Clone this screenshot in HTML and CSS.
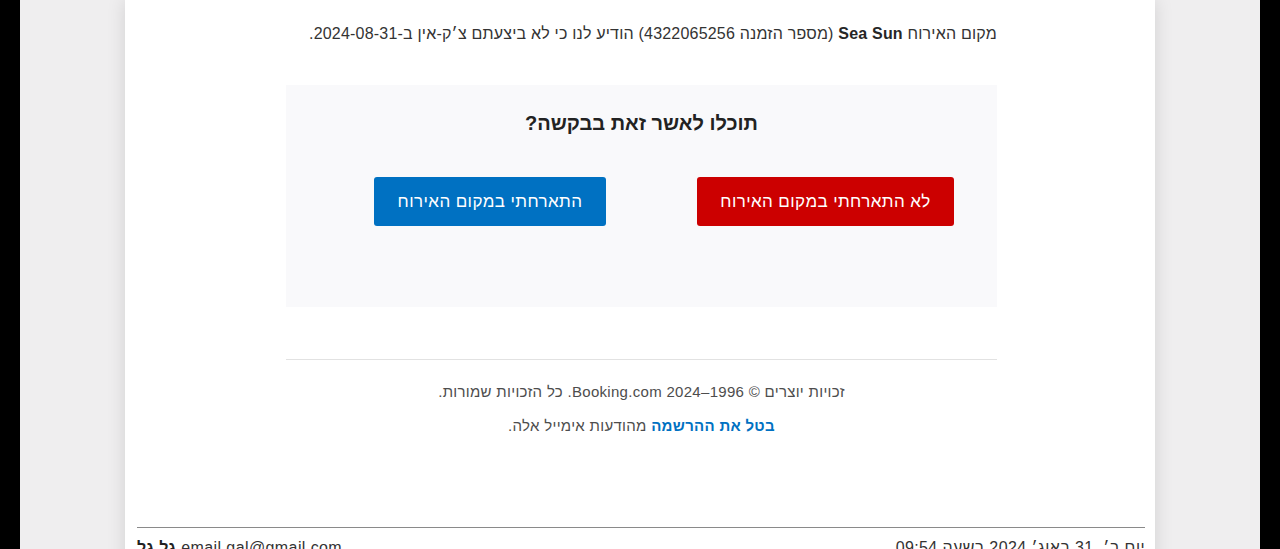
FILE: index.html
```html
<!DOCTYPE html>
<html lang="he" dir="rtl">
<head>
    <meta charset="UTF-8">
    <meta name="viewport" content="width=device-width, initial-scale=1.0">
    <title>Booking.com - צ׳ק-אין</title>
    <link rel="stylesheet" href="styles.css">
</head>
<body>
    <div class="frame">
        <div class="sheet">
            <div class="mail">
                <p class="intro">מקום האירוח <strong>Sea Sun</strong> (מספר הזמנה 4322065256) הודיע לנו כי לא ביצעתם צ׳ק-אין ב-2024-08-31.</p>

                <!-- Confirm box -->
                <div class="confirm">
                    <h2>תוכלו לאשר זאת בבקשה?</h2>
                    <div class="actions">
                        <a href="#" class="btn btn-red">לא התארחתי במקום האירוח</a>
                        <a href="#" class="btn btn-blue">התארחתי במקום האירוח</a>
                    </div>
                </div>

                <hr class="divider">

                <!-- Footer -->
                <p class="legal">זכויות יוצרים © 1996–2024 Booking.com. כל הזכויות שמורות.</p>
                <p class="legal"><a href="#" class="unsub">בטל את ההרשמה</a> מהודעות אימייל אלה.</p>
            </div>

            <div class="print-head">
                <span class="date">יום ב׳, 31 באוג׳ 2024 בשעה 09:54</span>
                <span class="sender" dir="ltr"><b>גל גל</b> email.gal@gmail.com</span>
            </div>
        </div>
    </div>
</body>
</html>
```

FILE: styles.css
```css
html, body {
    margin: 0;
    padding: 0;
    background: #000;
    height: 100%;
    overflow: hidden;
}
body {
    font-family: "Liberation Sans", Arial, "Noto Sans", sans-serif;
    color: #333;
}
.frame {
    margin: 0 20px;
    padding: 0 105px;
    min-height: 100%;
    background: #efeeef;
}
.sheet {
    background: #fff;
    min-height: 600px;
    box-shadow: 0 0 18px rgba(0, 0, 0, 0.12);
    padding-top: 23px;
}
.mail {
    width: 711px;
    margin: 0 158px 0 auto;
}
.intro {
    margin: 0 0 40px;
    font-size: 16px;
    line-height: 22px;
    letter-spacing: 0.2px;
    color: #333;
}
.intro strong {
    color: #262626;
}
.confirm {
    background: #f9f9fb;
    height: 222px;
    box-sizing: border-box;
    padding-top: 24px;
    text-align: center;
}
.confirm h2 {
    margin: 0 0 40px;
    font-size: 20px;
    line-height: 28px;
    color: #222;
}
.actions {
    display: flex;
    justify-content: center;
    gap: 91px;
    padding-left: 45px;
}
.btn {
    display: block;
    height: 49px;
    line-height: 49px;
    padding: 0;
    font-size: 17px;
    letter-spacing: 0.4px;
    text-align: center;
    color: #fff;
    text-decoration: none;
    border-radius: 3px;
}
.btn-red {
    background: #cc0000;
    width: 257px;
}
.btn-blue {
    background: #0071c2;
    width: 232px;
}
.divider {
    margin: 52px 0 22px;
    border: none;
    border-top: 1px solid #e2e2e2;
}
.legal {
    margin: 0 0 14px;
    font-size: 15px;
    line-height: 20px;
    letter-spacing: 0.3px;
    color: #4d4d4d;
    text-align: center;
}
.unsub {
    color: #0071c2;
    font-weight: bold;
    text-decoration: none;
}
.print-head {
    margin: 91px 10px 0 12px;
    padding-top: 11px;
    border-top: 1px solid #8a8a8a;
    display: flex;
    justify-content: space-between;
    font-size: 16px;
    line-height: 18px;
    letter-spacing: 0.4px;
    color: #333;
}
.sender b {
    color: #222;
}
```
